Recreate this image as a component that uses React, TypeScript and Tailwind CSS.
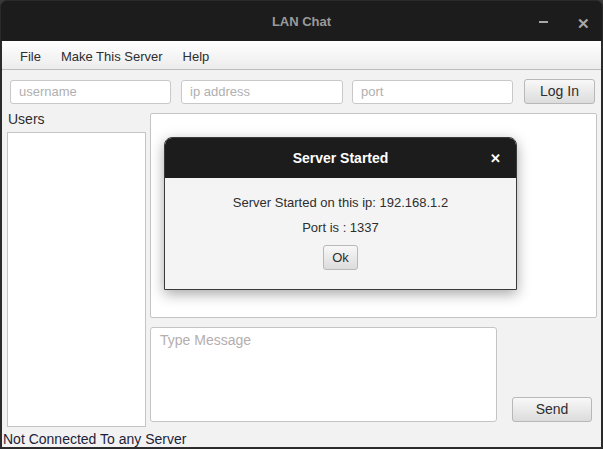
export default function App() {
  return (
    <div className="h-[449px] w-[603px] bg-[#3a3a3a] font-['Liberation_Sans',Arial,sans-serif] text-[13px] text-[#2e2e2e]">
      <div className="relative flex h-full flex-col overflow-hidden rounded-t-[7px] border border-[#2a2a2a] bg-[#1c1c1c]">
        {/* title bar */}
        <div className="relative flex h-[40px] shrink-0 items-center justify-center pt-[1px]">
          <span className="font-bold text-[#9a9a9a]">LAN Chat</span>
          <span className="absolute left-[538px] top-[20px] h-[2px] w-[9px] bg-[#a8a8a8]" />
          <span className="absolute left-[576px] top-[12px] text-[15px] font-bold text-[#a8a8a8]">✕</span>
        </div>

        <div className="flex flex-1 flex-col border-x border-b border-x-[#2a2a2a] bg-[#f2f2f2]">
          {/* menu */}
          <div className="flex h-[29px] shrink-0 items-center gap-[20px] border-b border-[#bdbdbd] bg-gradient-to-b from-white to-[#ececec] pl-[18px] pt-[3px]">
            <span>File</span>
            <span>Make This Server</span>
            <span>Help</span>
          </div>

          {/* login row */}
          <div className="flex items-center pl-[8px] pt-[9px]">
            <input
              placeholder="username"
              className="h-[24px] w-[161px] rounded-[3px] border border-[#c8c8c8] bg-white px-[8px] placeholder:text-[#b0b0b0]"
            />
            <input
              placeholder="ip address"
              className="ml-[10px] h-[24px] w-[162px] rounded-[3px] border border-[#c8c8c8] bg-white px-[8px] placeholder:text-[#b0b0b0]"
            />
            <input
              placeholder="port"
              className="ml-[9px] h-[24px] w-[161px] rounded-[3px] border border-[#c8c8c8] bg-white px-[8px] placeholder:text-[#b0b0b0]"
            />
            <button className="ml-[11px] h-[25px] w-[71px] rounded-[3px] border border-[#b8b8b8] bg-gradient-to-b from-[#f8f8f8] to-[#dcdcdc] text-[14px] text-[#2e2e2e]">
              Log In
            </button>
          </div>

          {/* main */}
          <div className="flex flex-1 pt-[9px]">
            <div className="flex w-[143px] flex-col pl-[5px]">
              <span className="-mt-[2px] pl-[1px] text-[14px] leading-[16px]">Users</span>
              <div className="mt-[5px] h-[295px] w-[139px] border border-[#c4c4c4] bg-white" />
              <span className="-ml-[4px] mt-[4px] whitespace-nowrap text-[14px] leading-[16px] text-[#1e1e3a]">
                Not Connected To any Server
              </span>
            </div>

            <div className="ml-[5px] flex flex-col">
              <div className="h-[205px] w-[447px] rounded-[2px] border border-[#c4c4c4] bg-white" />
              <div className="mt-[9px] flex items-end">
                <div className="h-[95px] w-[347px] rounded-[3px] border border-[#c4c4c4] bg-white px-[9px] pt-[2px] text-[14px] text-[#b5aeae]">
                  Type Message
                </div>
                <button className="ml-[15px] h-[25px] w-[80px] rounded-[3px] border border-[#b8b8b8] bg-gradient-to-b from-[#f8f8f8] to-[#dcdcdc] text-[14px] text-[#2e2e2e]">
                  Send
                </button>
              </div>
            </div>
          </div>
        </div>

        {/* dialog */}
        <div className="absolute left-[163px] top-[136px] flex h-[153px] w-[353px] flex-col overflow-hidden rounded-t-[8px] border border-[#3a3a3a] shadow-[0_4px_14px_rgba(0,0,0,0.35)]">
          <div className="relative flex h-[40px] shrink-0 items-center justify-center bg-[#1c1c1c]">
            <span className="text-[14px] font-bold text-white">Server Started</span>
            <span className="absolute left-[325px] top-[11px] text-[13px] font-bold text-white">✕</span>
          </div>
          <div className="flex flex-1 flex-col items-center bg-[#f4f4f4] pt-[17px]">
            <span className="text-[13px] leading-[16px]">Server Started on this ip: 192.168.1.2</span>
            <span className="mt-[9px] text-[13px] leading-[16px]">Port is : 1337</span>
            <button className="mt-[9px] h-[25px] w-[35px] rounded-[3px] border border-[#b8b8b8] bg-gradient-to-b from-[#f8f8f8] to-[#dcdcdc] text-[13px] text-[#2e2e2e]">
              Ok
            </button>
          </div>
        </div>
      </div>
    </div>
  );
}
